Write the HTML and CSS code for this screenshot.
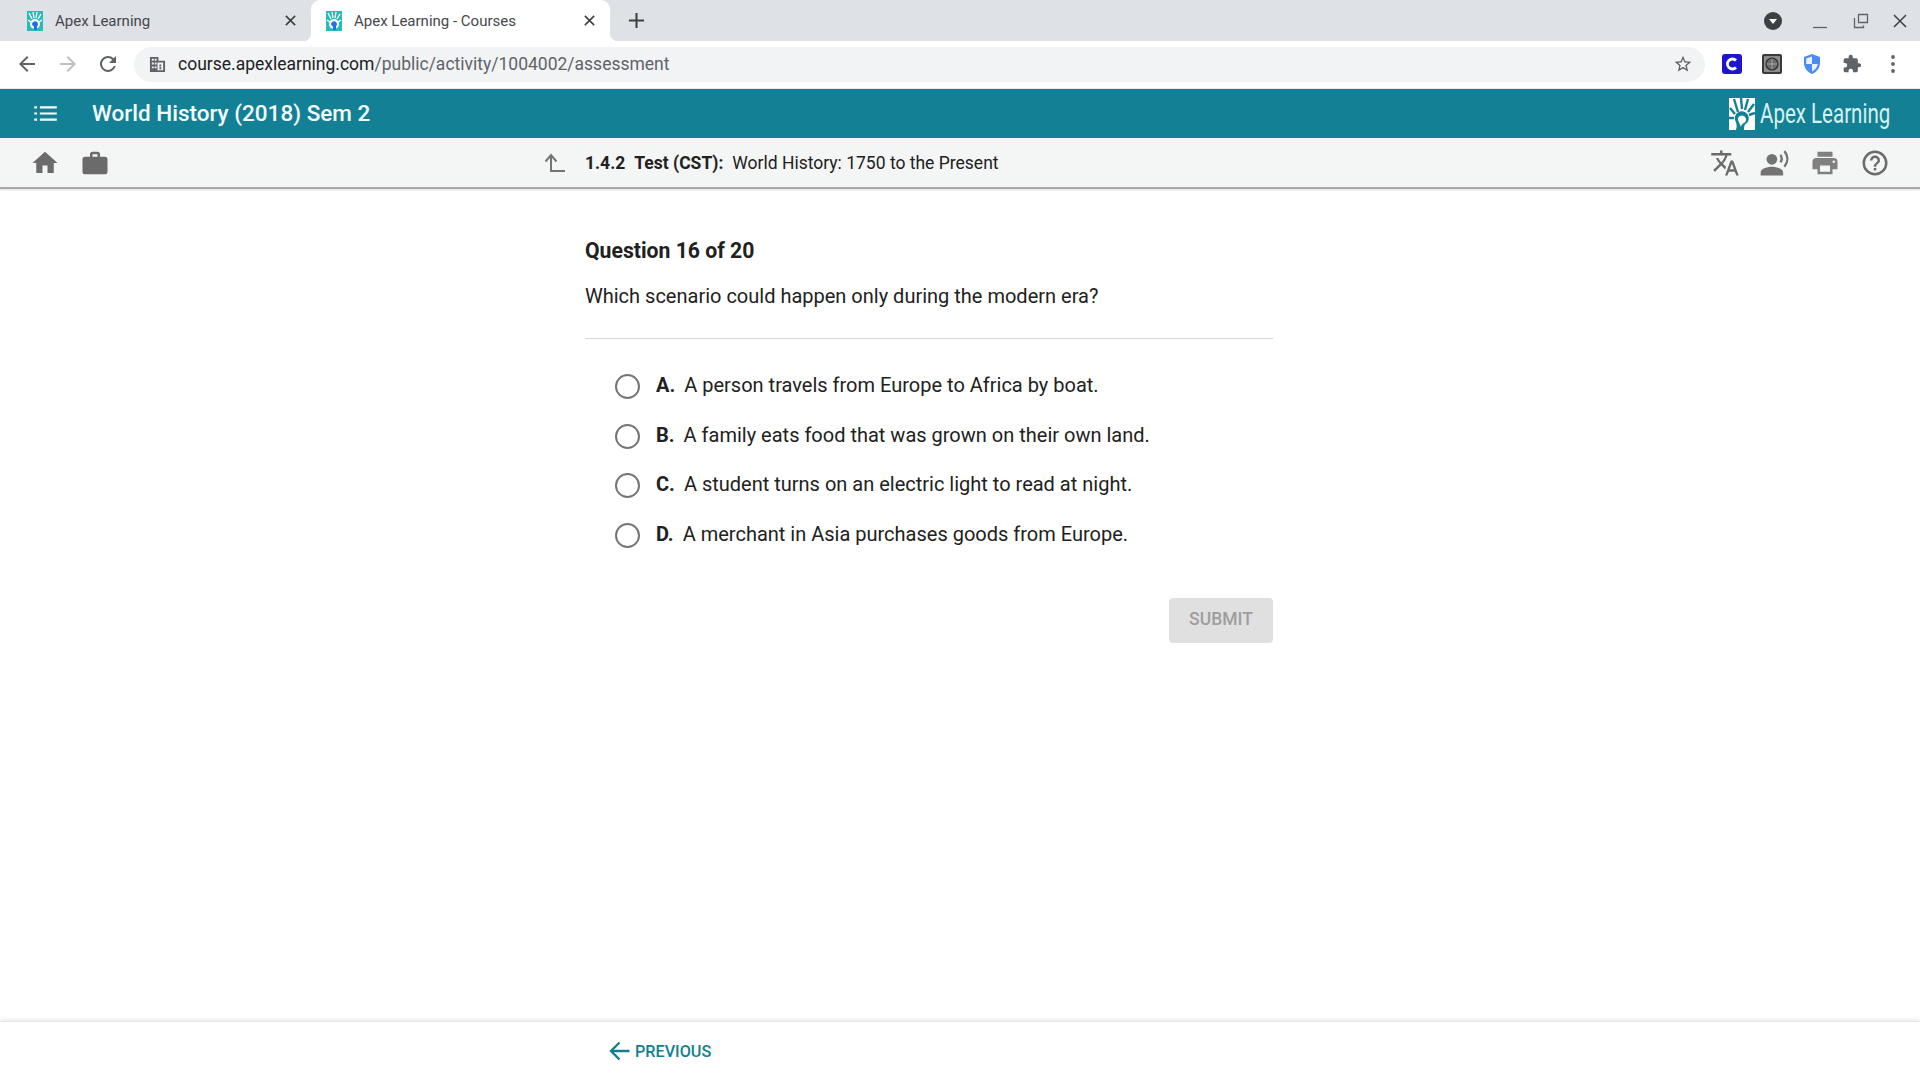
FILE: index.html
```html
<!DOCTYPE html>
<html lang="en">
<head>
<meta charset="utf-8">
<title>Apex Learning - Courses</title>
<link rel="stylesheet" href="styles.css">
</head>
<body>
<div class="tabstrip">
  <div class="tab">
    <svg class="favicon" viewBox="0 0 16 20"><rect width="16" height="20" fill="#25bdb8"/><path d="M2 2l3 6M6 1l1 6M10 1L9 7M14 3l-3 5M1 9l3 2M15 9l-3 2" stroke="#fff" stroke-width="1.3" fill="none"/><circle cx="8" cy="13" r="5" fill="#fff"/><path d="M5 13a3 3 0 1 1 5 2.5V19H7v-3.500A3 3 0 0 1 5 13z" fill="#1a73e8"/></svg>
    <span class="tab-title">Apex Learning</span>
    <svg class="tab-close" viewBox="0 0 14 14"><path d="M2 2l10 10M12 2L2 12" stroke="#3c4043" stroke-width="1.700" fill="none"/></svg>
  </div>
  <div class="tab tab-active">
    <svg class="favicon" viewBox="0 0 16 20"><rect width="16" height="20" fill="#25bdb8"/><path d="M2 2l3 6M6 1l1 6M10 1L9 7M14 3l-3 5M1 9l3 2M15 9l-3 2" stroke="#fff" stroke-width="1.3" fill="none"/><circle cx="8" cy="13" r="5" fill="#fff"/><path d="M5 13a3 3 0 1 1 5 2.5V19H7v-3.500A3 3 0 0 1 5 13z" fill="#1a73e8"/></svg>
    <span class="tab-title">Apex Learning - Courses</span>
    <svg class="tab-close" viewBox="0 0 14 14"><path d="M2 2l10 10M12 2L2 12" stroke="#3c4043" stroke-width="1.700" fill="none"/></svg>
  </div>
  <svg class="newtab" viewBox="0 0 18 18"><path d="M9 1v16M1 9h16" stroke="#3c4043" stroke-width="2.200" fill="none"/></svg>
  <div class="window-controls">
    <svg class="profile" viewBox="0 0 18 18"><circle cx="9" cy="9" r="9" fill="#3c4043"/><path d="M5 7h8l-4 5z" fill="#fff"/></svg>
    <svg class="win-btn win-min" viewBox="0 0 16 16"><path d="M1 14.500h14" stroke="#5f6368" stroke-width="1.300"/></svg>
    <svg class="win-btn win-restore" viewBox="0 0 16 16"><path d="M5.500 1.500h9v8h-9zM1.500 5v9.500h9v-2" stroke="#5f6368" stroke-width="1.300" fill="none"/></svg>
    <svg class="win-btn win-close" viewBox="0 0 16 16"><path d="M2 2l12 12M14 2L2 14" stroke="#3c4043" stroke-width="1.500" fill="none"/></svg>
  </div>
</div>

<div class="toolbar">
  <svg class="nav-icon" viewBox="0 0 24 24"><path d="M20 11H7.800l5.600-5.600L12 4l-8 8 8 8 1.400-1.400L7.800 13H20z" fill="#5f6368"/></svg>
  <svg class="nav-icon" viewBox="0 0 24 24"><path d="M4 11h12.200l-5.600-5.600L12 4l8 8-8 8-1.400-1.400 5.600-5.600H4z" fill="#bdc1c6"/></svg>
  <svg class="nav-icon" viewBox="0 0 24 24"><path d="M17.650 6.350A8 8 0 1 0 19.730 14h-2.080a6 6 0 1 1-1.410-6.240L13 11h7V4z" fill="#5f6368"/></svg>
  <div class="omnibox">
    <svg class="site-icon" viewBox="0 0 18 18"><path d="M1 1h9v4h7v12H1zM3 3v2h2V3zm3 0v2h2V3zM3 7v2h2V7zm3 0v2h2V7zM3 11v2h2v-2zm3 0v2h2v-2zm-3 4v0h5v0zm6-8v8h6V7zm2 2h2v2h-2zm0 3h2v2h-2z" fill="#5f6368" fill-rule="evenodd"/></svg>
    <span class="url"><span class="url-host">course.apexlearning.com</span>/public/activity/1004002/assessment</span>
    <svg class="star" viewBox="0 0 24 24"><path d="M22 9.240l-7.190-.620L12 2 9.190 8.630 2 9.240l5.460 4.730L5.820 21 12 17.270 18.180 21l-1.630-7.030zM12 15.400l-3.760 2.270 1-4.280-3.320-2.880 4.380-.380L12 6.100l1.710 4.040 4.380.380-3.320 2.880 1 4.280z" fill="#5f6368"/></svg>
  </div>
  <div class="extensions">
    <svg class="ext" viewBox="0 0 20 20"><rect width="20" height="20" rx="3" fill="#1c14cf"/><path d="M14 6.500a5 5 0 1 0 0 7" stroke="#fff" stroke-width="2.800" fill="none"/></svg>
    <svg class="ext" viewBox="0 0 20 20"><rect width="20" height="20" rx="2" fill="#3a3a3a"/><rect x="2" y="2" width="16" height="16" fill="#8c8c8c"/><circle cx="10" cy="10" r="6" fill="#6a6a6a" stroke="#2e2e2e" stroke-width="1.200"/><path d="M10 5v10M5 10h10" stroke="#b5b5b5" stroke-width=".8"/></svg>
    <svg class="ext" viewBox="0 0 20 20"><path d="M10 0l8 3v6c0 5-3.500 9-8 11-4.500-2-8-6-8-11V3z" fill="#4a8cf0"/><path d="M10 2.500V10H4.200V4.500zM10 10h5.800c-.5 3.500-2.900 6-5.800 7.500z" fill="#e8f0fe"/></svg>
    <svg class="ext" viewBox="0 0 24 24"><path d="M20.500 11H19V7a2 2 0 0 0-2-2h-4V3.500a2.500 2.500 0 0 0-5 0V5H4a2 2 0 0 0-2 2v3.800h1.500a2.700 2.700 0 0 1 0 5.400H2V20a2 2 0 0 0 2 2h3.800v-1.500a2.700 2.700 0 0 1 5.400 0V22H17a2 2 0 0 0 2-2v-4h1.500a2.500 2.500 0 0 0 0-5z" fill="#5f6368"/></svg>
    <svg class="ext-dots" viewBox="0 0 4 18"><circle cx="2" cy="2" r="1.900" fill="#5f6368"/><circle cx="2" cy="9" r="1.900" fill="#5f6368"/><circle cx="2" cy="16" r="1.900" fill="#5f6368"/></svg>
  </div>
</div>

<header class="appbar">
  <svg class="menu-icon" viewBox="0 0 24 16"><path d="M6 1.500h18M6 8h18M6 14.500h18" stroke="#fff" stroke-width="2.300"/><path d="M0 1.500h3M0 8h3M0 14.500h3" stroke="#fff" stroke-width="2.300"/></svg>
  <h1 class="course-title">World History (2018) Sem 2</h1>
  <div class="logo">
    <svg class="logo-mark" viewBox="0 0 26 32"><rect width="26" height="32" fill="#fff"/><path d="M5 1l4 13M12 0l1 11M19 1l-3 11M25 6l-6 8M1 10l5 6M26 15l-6 2M0 20l5 0" stroke="#138096" stroke-width="2.400" fill="none"/><path d="M6 22a7 7 0 1 1 12 3c-2 1-3 2-3 7H7c1-4 1-6-1-10z" fill="#138096"/><path d="M9 22a4 4 0 1 1 6 3c-2 1-3 2-3 4" fill="#fff"/></svg>
    <span class="logo-text">Apex Learning</span>
  </div>
</header>

<nav class="subbar">
  <div class="sub-left">
    <svg class="sub-icon" viewBox="0 0 24 24"><path d="M10 20v-6h4v6h5v-8h3L12 3 2 12h3v8z" fill="#6b6b6b"/></svg>
    <svg class="sub-icon" viewBox="0 0 24 24"><path d="M20 7h-4V5a2 2 0 0 0-2-2h-4a2 2 0 0 0-2 2v2H4a2 2 0 0 0-2 2v10a2 2 0 0 0 2 2h16a2 2 0 0 0 2-2V9a2 2 0 0 0-2-2zm-6 0h-4V5h4z" fill="#6b6b6b"/></svg>
  </div>
  <div class="breadcrumb">
    <svg class="up-icon" viewBox="0 0 22 20"><path d="M7 19V3M1.500 8.500L7 2l5.500 6.500M7 18h14" stroke="#757575" stroke-width="2" fill="none"/></svg>
    <strong class="crumb-num">1.4.2</strong>
    <strong class="crumb-type">Test (CST):</strong>
    <span class="crumb-name">World History: 1750 to the Present</span>
  </div>
  <div class="sub-right">
    <svg class="sub-icon" viewBox="0 0 24 24"><path d="M12.870 15.070l-2.540-2.510.030-.030A17.500 17.500 0 0 0 14.070 6H17V4h-7V2H8v2H1v2h11.170C11.500 7.920 10.440 9.750 9 11.350 8.070 10.320 7.300 9.190 6.690 8h-2c.73 1.630 1.730 3.170 2.980 4.560l-5.090 5.020L4 19l5-5 3.110 3.110zM18.500 10h-2L12 22h2l1.120-3h4.750L21 22h2zm-2.620 7l1.620-4.330L19.120 17z" fill="#6b6b6b"/></svg>
    <svg class="sub-icon" viewBox="0 0 24 24"><circle cx="9.500" cy="9" r="4.300" fill="#737373"/><path d="M9.500 15c-3 0-9 1.300-9 4.500V22h18v-2.500c0-3.200-6-4.500-9-4.500z" fill="#737373"/><path d="M16.300 5.500c1.400 1.900 1.400 4.100 0 6M19.500 2.500c3.200 3.700 3.200 8.500 0 12.500" stroke="#737373" stroke-width="1.900" fill="none"/></svg>
    <svg class="sub-icon" viewBox="0 0 24 24"><path d="M19 8H5a3 3 0 0 0-3 3v6h4v4h12v-4h4v-6a3 3 0 0 0-3-3zm-3 11H8v-5h8zm3-7a1 1 0 1 1 0-2 1 1 0 0 1 0 2zM18 3H6v4h12z" fill="#808080"/></svg>
    <svg class="sub-icon" viewBox="0 0 24 24"><path d="M11 18h2v-2h-2zm1-16a10 10 0 1 0 0 20 10 10 0 0 0 0-20zm0 18a8 8 0 1 1 0-16 8 8 0 0 1 0 16zm0-14a4 4 0 0 0-4 4h2a2 2 0 1 1 4 0c0 2-3 1.750-3 5h2c0-2.250 3-2.500 3-5a4 4 0 0 0-4-4z" fill="#6b6b6b"/></svg>
  </div>
</nav>

<main class="content">
  <section class="question">
    <h2 class="q-heading">Question 16 of 20</h2>
    <p class="q-text">Which scenario could happen only during the modern era?</p>
    <ul class="options">
      <li class="option"><span class="radio"></span><b class="opt-letter">A.</b><span>A person travels from Europe to Africa by boat.</span></li>
      <li class="option"><span class="radio"></span><b class="opt-letter">B.</b><span>A family eats food that was grown on their own land.</span></li>
      <li class="option"><span class="radio"></span><b class="opt-letter">C.</b><span>A student turns on an electric light to read at night.</span></li>
      <li class="option"><span class="radio"></span><b class="opt-letter">D.</b><span>A merchant in Asia purchases goods from Europe.</span></li>
    </ul>
    <div class="actions"><button class="submit" type="button">SUBMIT</button></div>
  </section>
</main>

<footer class="footer">
  <a class="prev">
    <svg class="prev-icon" viewBox="0 0 20 20"><path d="M20 10H2.500M10 1.500L1.500 10l8.500 8.500" stroke="#13808f" stroke-width="2.400" fill="none"/></svg>
    PREVIOUS
  </a>
</footer>
</body>
</html>
```

FILE: styles.css
```css
* { box-sizing: border-box; }
html, body { height: 100%; }
body {
  margin: 0;
  display: flex;
  flex-direction: column;
  height: 1080px;
  overflow: hidden;
  background: #fff;
  color: #212121;
  font-family: Roboto, "Liberation Sans", sans-serif;
}

/* Browser tab strip */
.tabstrip {
  height: 41px;
  flex: none;
  display: flex;
  align-items: center;
  background: #dee1e6;
}
.tab {
  width: 299px;
  height: 41px;
  margin-left: 6px;
  padding: 0 7px 0 21px;
  display: flex;
  align-items: center;
  position: relative;
}
.tab-active {
  width: 299px;
  margin-left: 6px;
  padding: 0 13px 0 15px;
  background: #fff;
  border-radius: 9px 9px 0 0;
}
.tab-active::before,
.tab-active::after {
  content: "";
  position: absolute;
  bottom: 0;
  width: 8px;
  height: 8px;
}
.tab-active::before { left: -8px; background: radial-gradient(circle at 0 0, transparent 8px, #fff 8.500px); }
.tab-active::after { right: -8px; background: radial-gradient(circle at 100% 0, transparent 8px, #fff 8.500px); }
.favicon { width: 16px; height: 20px; flex: none; }
.tab-title {
  margin-left: 12px;
  flex: 1;
  font-size: 15px;
  color: #45484c;
}
.tab-close { width: 13px; height: 13px; flex: none; margin-right: 1px; }
.newtab { width: 17px; height: 17px; margin-left: 18px; flex: none; }
.window-controls {
  margin-left: auto;
  display: flex;
  align-items: center;
  padding-right: 12px;
}
.profile { width: 18px; height: 18px; margin-right: 30px; }
.win-btn { width: 16px; height: 16px; }
.win-restore { margin-left: 25px; }
.win-close { margin-left: 23px; }

/* Browser toolbar */
.toolbar {
  height: 48px;
  flex: none;
  display: flex;
  align-items: center;
  padding: 0 0 1px 15px;
  background: #fff;
  border-bottom: 1px solid #e6e8ea;
}
.nav-icon { width: 24px; height: 24px; margin-right: 16px; flex: none; }
.nav-icon:nth-of-type(1) { margin-right: 17px; }
.nav-icon:nth-of-type(3) { margin-right: 14px; }
.omnibox {
  width: 1571px;
  height: 35px;
  flex: none;
  display: flex;
  align-items: center;
  padding: 0 12px 0 15px;
  border-radius: 18px;
  background: #f1f3f4;
}
.site-icon { width: 17px; height: 17px; flex: none; }
.url {
  margin-left: 12px;
  flex: 1;
  font-size: 17.500px;
  color: #5f6368;
}
.url-host { color: #202124; }
.star { width: 20px; height: 20px; flex: none; }
.extensions {
  flex: 1;
  display: flex;
  align-items: center;
  padding-left: 17px;
}
.ext { width: 20px; height: 20px; margin-right: 20px; flex: none; }
.ext-dots { width: 4px; height: 18px; margin-left: 9px; flex: none; }

/* App header */
.appbar {
  height: 49px;
  flex: none;
  display: flex;
  align-items: center;
  padding: 0 30px 0 34px;
  background: #138096;
  color: #fff;
}
.menu-icon { width: 23px; height: 15px; flex: none; }
.course-title {
  margin: 0 0 2px 35px;
  font-size: 22.500px;
  font-weight: 500;
  color: #f4fdfe;
}
.logo { margin-left: auto; display: flex; align-items: center; }
.logo-mark { width: 26px; height: 32px; flex: none; }
.logo-text {
  width: 130px;
  margin-left: 5px;
  white-space: nowrap;
  font-size: 27px;
  color: #d5f2f0;
  transform: scaleX(.76);
  transform-origin: left center;
}

/* Sub navigation */
.subbar {
  height: 51px;
  flex: none;
  display: flex;
  align-items: center;
  padding: 0 30px 0 30px;
  background: #f4f5f5;
  border-bottom: 2px solid #a9a9a9;
  box-shadow: 0 1px 2px rgba(0,0,0,.15);
  font-size: 17.500px;
}
.sub-icon { width: 30px; height: 30px; flex: none; }
.sub-left { display: flex; gap: 20px; width: 80px; }
.breadcrumb {
  margin-left: 434px;
  display: flex;
  align-items: center;
  color: #212121;
}
.up-icon { width: 22px; height: 20px; margin-right: 19px; flex: none; }
.crumb-num { margin-right: 9px; font-weight: 700; }
.crumb-type { margin-right: 9px; font-weight: 700; }
.sub-right { margin-left: auto; display: flex; gap: 20px; }

/* Question */
.content { flex: 1; padding-left: 585px; }
.question { width: 688px; }
.q-heading {
  margin: 49px 0 0;
  font-size: 21.200px;
  line-height: 26px;
  font-weight: 700;
}
.q-text {
  margin: 19px 0 0;
  padding-bottom: 28px;
  border-bottom: 1px solid #d9d9d9;
  font-size: 20px;
  line-height: 27px;
}
.options { list-style: none; margin: 0; padding: 21px 0 0 30px; }
.option {
  height: 49.700px;
  display: flex;
  align-items: center;
  font-size: 20px;
}
.radio {
  width: 25px;
  height: 25px;
  flex: none;
  margin: 3px 16px 0 0;
  border: 2px solid #757575;
  border-radius: 50%;
  background: #fff;
}
.opt-letter { margin-right: 9px; font-weight: 700; }
.actions { display: flex; justify-content: flex-end; margin-top: 39px; }
.submit {
  width: 104px;
  height: 45px;
  padding: 0 0 2px;
  border: 0;
  border-radius: 4px;
  background: #e0e0e0;
  color: #9e9e9e;
  font-family: inherit;
  font-size: 17.500px;
  font-weight: 500;
}

/* Footer */
.footer {
  height: 59px;
  flex: none;
  display: flex;
  align-items: center;
  padding: 0 0 0 609px;
  border-top: 1px solid #e6e6e6;
  box-shadow: 0 -2px 4px rgba(0,0,0,.08);
}
.prev {
  display: flex;
  align-items: center;
  color: #13808f;
  font-size: 16.200px;
  font-weight: 500;
}
.prev-icon { width: 21px; height: 20px; margin-right: 5px; flex: none; }
```
